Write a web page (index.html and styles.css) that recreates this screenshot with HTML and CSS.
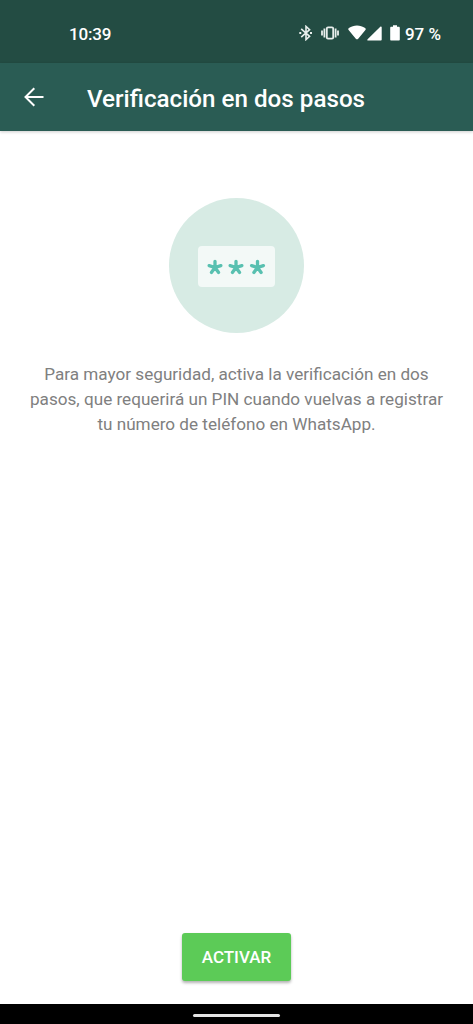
FILE: index.html
```html
<!DOCTYPE html>
<html lang="es">
<head>
  <meta charset="UTF-8">
  <meta name="viewport" content="width=device-width, initial-scale=1">
  <title>Verificación en dos pasos</title>
  <link rel="stylesheet" href="styles.css">
</head>
<body>

  <div class="status-bar">
    <span class="time">10:39</span>
    <div class="status-icons">
      <svg class="bluetooth" width="14" height="16" viewBox="0 0 14 16" fill="none" stroke="#e8eeec" stroke-width="1.6">
        <path d="M2.2 3.8 10.6 11.3 7 14.6V1.4L10.6 4.7 2.2 12.2"/>
        <path d="M.3 8h2M11 8h2" stroke-width="2"/>
      </svg>
      <svg class="vibrate" width="18" height="14" viewBox="0 0 18 14" fill="none" stroke="#e8eeec" stroke-width="1.8">
        <rect x="5.8" y="1.3" width="6.4" height="11.4" rx="1.2"/>
        <path d="M3.4 2.5v9M14.6 2.5v9M1 4.5v5M17 4.5v5"/>
      </svg>
      <svg class="wifi" width="18" height="15" viewBox="0 0 18 15" fill="#fff">
        <path d="M.6 5C.1 4.4.2 3.6.9 3.1 5.7-.4 12.300-.4 17.100 3.100c.7.5.8 1.300.3 1.900L10.200 13.700c-.7.8-1.700.8-2.400 0z"/>
      </svg>
      <svg class="signal" width="15" height="15" viewBox="0 0 15 15" fill="#fff">
        <path d="M13.300.7c.6-.6 1.400-.3 1.400.6V13.500c0 .7-.4 1.100-1.100 1.100H1.200c-.9 0-1.200-.8-.6-1.400z"/>
      </svg>
      <svg class="battery" width="10" height="16" viewBox="0 0 10 16" fill="#fff">
        <path d="M3 .3h4v1.500h1.700c.7 0 1.100.4 1.100 1.100v11.600c0 .7-.4 1.100-1.100 1.100H1.300c-.7 0-1.100-.4-1.100-1.100V2.900c0-.7.4-1.100 1.100-1.100H3z"/>
      </svg>
      <span class="percent">97 %</span>
    </div>
  </div>

  <header class="header">
    <button class="back" aria-label="Atrás">
      <svg width="20" height="20" viewBox="0 0 20 20" fill="none" stroke="#fff" stroke-width="2">
        <path d="M19.500 10H2M10.300 1.200 1.500 10l8.800 8.800"/>
      </svg>
    </button>
    <h1>Verificación en dos pasos</h1>
  </header>

  <main class="content">
    <div class="circle">
      <div class="pin">
        <svg width="60" height="18" viewBox="0 0 60 18" stroke="#58c0b0" stroke-width="3.300" stroke-linecap="round">
          <defs>
            <path id="star" d="M0 0V-6.200M0 0 5.900-1.900M0 0 3.600 5M0 0-3.600 5M0 0-5.900-1.900"/>
          </defs>
          <use href="#star" x="8" y="9.500"/>
          <use href="#star" x="29" y="9.500"/>
          <use href="#star" x="50.500" y="9.500"/>
        </svg>
      </div>
    </div>
    <p>Para mayor seguridad, activa la verificación en dos pasos, que requerirá un PIN cuando vuelvas a registrar tu número de teléfono en WhatsApp.</p>
    <button class="activate">ACTIVAR</button>
  </main>

  <div class="nav-bar">
    <div class="handle"></div>
  </div>

</body>
</html>
```
FILE: styles.css
```css
* {
  box-sizing: border-box;
}
body {
  margin: 0;
  height: 100vh;
  display: flex;
  flex-direction: column;
  font-family: Roboto, sans-serif;
  background-color: #fff;
}
button {
  border: 0;
  padding: 0;
  font-family: inherit;
  cursor: pointer;
}
svg {
  display: block;
}
.status-bar {
  height: 63px;
  flex-shrink: 0;
  display: flex;
  justify-content: space-between;
  align-items: center;
  padding: 5px 32px 0 69px;
  background-color: #234c43;
  color: #fff;
  font-size: 17px;
  font-weight: 500;
}
.time {
  letter-spacing: -0.2px;
}
.status-icons {
  display: flex;
  align-items: center;
}
.bluetooth {
  margin-top: -2px;
}
.vibrate {
  margin-top: -2px;
  margin-left: 8px;
}
.wifi {
  margin: -3px 1px 0 9px;
}
.signal {
  margin-top: -2px;
}
.battery {
  margin: -2px 5px 0 8px;
}
.header {
  height: 68px;
  flex-shrink: 0;
  display: flex;
  align-items: center;
  padding: 1px 24px 0;
  background-color: #2a5c54;
  color: #fff;
  box-shadow: 0 1px 3px rgba(0, 0, 0, 0.2);
}
.back {
  margin-right: 43px;
  margin-bottom: 2px;
  background: none;
}
.header h1 {
  margin: 2px 0 0;
  font-size: 24.2px;
  font-weight: 500;
  white-space: nowrap;
}
.content {
  flex: 1;
  display: flex;
  flex-direction: column;
  align-items: center;
  padding: 67px 28px 23px;
}
.circle {
  width: 135px;
  height: 135px;
  display: flex;
  justify-content: center;
  align-items: center;
  border-radius: 50%;
  background-color: #d7ebe4;
}
.pin {
  width: 77px;
  height: 41px;
  margin-top: 2px;
  display: flex;
  justify-content: center;
  align-items: center;
  border-radius: 4px;
  background-color: #f3f9f7;
}
.content p {
  width: 417px;
  margin: 29px 0 0;
  text-align: center;
  font-size: 17.14px;
  line-height: 25px;
  color: #808080;
}
.activate {
  width: 109px;
  height: 48px;
  margin-top: auto;
  border-radius: 3px;
  background-color: #5ccb57;
  color: #fff;
  font-size: 17px;
  font-weight: 500;
  box-shadow: 0 2px 3px rgba(0, 0, 0, 0.3);
}
.nav-bar {
  height: 20px;
  flex-shrink: 0;
  display: flex;
  justify-content: center;
  align-items: center;
  padding-top: 2px;
  background-color: #000;
}
.handle {
  width: 87px;
  height: 3px;
  border-radius: 2px;
  background-color: #e4e4e4;
}
```
